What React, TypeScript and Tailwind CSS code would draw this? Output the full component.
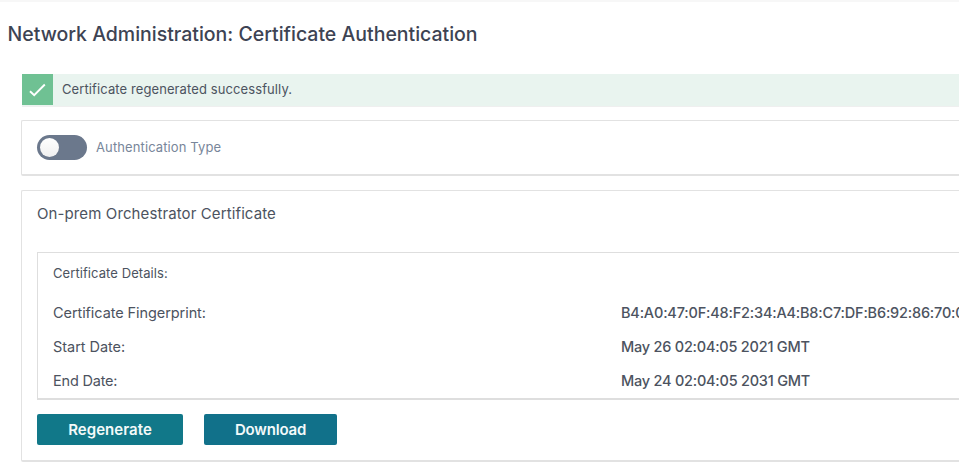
import React from "react";

const rows = [
  { label: "Certificate Fingerprint:", value: "B4:A0:47:0F:48:F2:34:A4:B8:C7:DF:B6:92:86:70:0", l: "tracking-[-0.08px]", v: "tracking-[-0.19px]" },
  { label: "Start Date:", value: "May 26 02:04:05 2021 GMT", l: "tracking-[-0.04px]", v: "tracking-[-0.23px]" },
  { label: "End Date:", value: "May 24 02:04:05 2031 GMT", l: "tracking-[-0.2px]", v: "tracking-[-0.23px]" },
];

function Toggle() {
  return (
    <button type="button" role="switch" aria-checked="false" aria-label="Authentication Type" className="flex h-[25px] w-[50px] items-center rounded-full bg-[#6b788c] pl-[3px]">
      <span className="h-[19px] w-[19px] rounded-full bg-gradient-to-b from-white to-[#f0f0f0]" />
    </button>
  );
}

export default function App() {
  return (
    <div className="h-[476px] w-full overflow-hidden border-t-2 border-[#f7f7f7] bg-white font-['Inter','Liberation_Sans',sans-serif] text-[#4c5360]">
      <h1 className="mt-[18px] ml-[7.5px] h-7 text-[19.5px] leading-7 font-medium tracking-[-0.01px] whitespace-nowrap text-[#3d4353]">
        <span>Network Administration: Certificate Authentication</span>
      </h1>
      <div className="mt-[26px] ml-[22px] flex h-[33px] border-b border-[#efefef] bg-[#e9f4ef]">
        <div className="flex h-[31px] w-[31px] items-center justify-center bg-[#6fc193]">
          <svg width="19" height="16" viewBox="0 0 19 16" fill="none" stroke="white" strokeWidth="1.9">
            <path d="M2 9.2 6.2 13.2 16.8 2.5" />
          </svg>
        </div>
        <p className="ml-[9px] text-[13px] leading-[31px] tracking-[0.1px]">Certificate regenerated successfully.</p>
      </div>
      <section className="mt-[13px] ml-[21px] flex h-14 items-center rounded-l-[2px] border border-r-0 border-b-2 border-[#e2e2e2] pl-[15px]">
        <Toggle />
        <span className="-mt-0.5 ml-[9px] text-[13px] leading-5 tracking-[0.11px] text-[#78869a]">Authentication Type</span>
      </section>
      <section className="mt-[14px] ml-[21px] h-[272px] rounded-l-[2px] border border-r-0 border-b-2 border-[#e2e2e2] pl-[15px]">
        <h2 className="pt-[13px] text-[15px] leading-5 tracking-[0.11px]">On-prem Orchestrator Certificate</h2>
        <div className="mt-[28px] h-[148px] overflow-hidden border border-r-0 border-b-2 border-[#dedede] pl-[15px]">
          <h3 className="pt-[10px] text-[13px] leading-5 tracking-[0.08px]">Certificate Details:</h3>
          <dl className="mt-[13px]">
            {rows.map((r) => (
              <div key={r.label} className="flex h-[34px] items-center text-[14.5px] leading-5 whitespace-nowrap">
                <dt className={`w-[568px] shrink-0 ${r.l}`}>{r.label}</dt>
                <dd className={`font-medium ${r.v}`}>{r.value}</dd>
              </div>
            ))}
          </dl>
        </div>
        <div className="mt-[14px] flex gap-[21px] text-[15px] font-semibold text-[#f4fafa]">
          <button type="button" className="h-[31px] w-[146px] rounded-[2px] bg-[#117889] pt-0.5 tracking-[0.05px]">Regenerate</button>
          <button type="button" className="h-[31px] w-[133px] rounded-[2px] bg-[#11718a] pt-0.5 tracking-[-0.2px]">Download</button>
        </div>
      </section>
    </div>
  );
}
